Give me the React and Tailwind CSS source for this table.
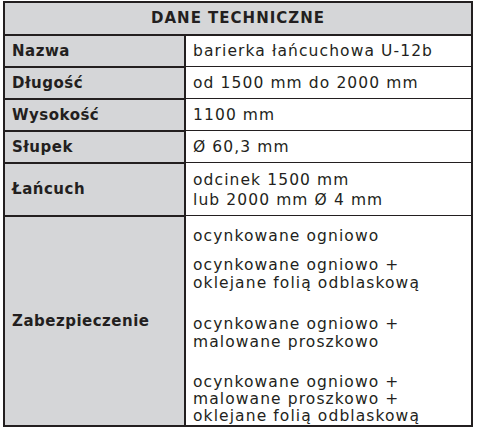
import React from "react";

const font = { fontFamily: "'DejaVu Sans', 'Open Sans', sans-serif" };

function Row({ label, children, h, last }) {
  return (
    <div className="grid grid-cols-[181px_1fr]">
      <div
        className={`flex items-center bg-[#d5d6d8] border-r-2 border-[#231f20] pl-[7px] font-bold text-[15px] tracking-[0.5px] ${last ? "" : "border-b-2"}`}
        style={{ height: h + (last ? 0 : 2) }}
      >
        {label}
      </div>
      <div
        className={`flex flex-col justify-center pl-[7px] text-[15.5px] leading-[20px] tracking-[1.1px] border-[#231f20] ${last ? "" : "border-b mb-[1px]"}`}
      >
        {children}
      </div>
    </div>
  );
}

export default function App() {
  return (
    <div className="w-[478px] h-[431px] bg-white text-[#231f20]" style={font}>
      <div className="ml-[3px] mt-[1px] w-[470px] border-2 border-[#231f20]">
        <div className="h-[33px] bg-[#d5d6d8] border-b-2 border-[#231f20] flex items-center justify-center font-bold text-[15px] tracking-[1px]">
          DANE TECHNICZNE
        </div>
        <Row label="Nazwa" h={30}>barierka łańcuchowa U-12b</Row>
        <Row label="Długość" h={30}>od 1500 mm do 2000 mm</Row>
        <Row label="Wysokość" h={30}>1100 mm</Row>
        <Row label="Słupek" h={30}>Ø 60,3 mm</Row>
        <Row label="Łańcuch" h={51}>
          <div>odcinek 1500 mm</div>
          <div>lub 2000 mm Ø 4 mm</div>
        </Row>
        <div className="grid grid-cols-[181px_1fr]">
          <div className="flex items-center bg-[#d5d6d8] border-r-2 border-[#231f20] pl-[7px] font-bold text-[15px] tracking-[0.5px] h-[208px]">
            Zabezpieczenie
          </div>
          <div className="pl-[7px] pt-[10px] text-[15.5px] leading-[18px] tracking-[1.1px] flex flex-col">
            <div>ocynkowane ogniowo</div>
            <div className="mt-[11px]">
              ocynkowane ogniowo +<br />oklejane folią odblaskową
            </div>
            <div className="mt-[23px]">
              ocynkowane ogniowo +<br />malowane proszkowo
            </div>
            <div className="mt-[23px] leading-[17px]">
              ocynkowane ogniowo +<br />malowane proszkowo +<br />oklejane folią odblaskową
            </div>
          </div>
        </div>
      </div>
    </div>
  );
}
